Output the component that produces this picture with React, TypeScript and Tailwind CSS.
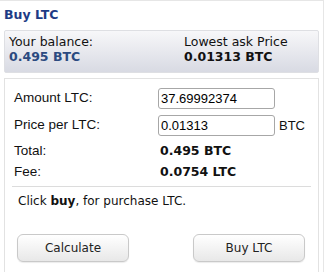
import React from 'react';

const verdana = { fontFamily: '"DejaVu Sans", Verdana, sans-serif' };
const arial = { fontFamily: '"Liberation Sans", Arial, sans-serif' };

function Field({ value }: { value: string }) {
  return (
    <input
      readOnly
      value={value}
      style={arial}
      className="w-[117px] h-[21px] rounded-[3px] border border-[#a7a7a7] bg-white px-[2px] text-[13px] text-black outline-none"
    />
  );
}

function Btn({ label }: { label: string }) {
  return (
    <button
      style={verdana}
      className="w-[112px] h-[28px] rounded-[6px] border border-[#c9c9c9] bg-gradient-to-b from-white to-[#e8e8e8] text-[12px] text-[#222] shadow-[0_1px_1px_rgba(0,0,0,0.08)]"
    >
      {label}
    </button>
  );
}

export default function App() {
  return (
    <div className="w-[324px] h-[272px] overflow-hidden border-t border-r border-[#e6e6e6] bg-white" style={verdana}>
      <div className="pl-[4px] pt-[6px] h-[29px] text-[12.5px] leading-[15px] font-bold text-[#1d3b85]">Buy LTC</div>

      <div className="mx-[4px] w-[315px] h-[43px] rounded-[2px] border border-[#dedfe3] bg-gradient-to-b from-[#f7f7f9] to-[#d8dae3] pl-[4px] pt-[3px] grid grid-cols-[175px_1fr] text-[12.5px] leading-[15px]">
        <div>
          <div className="text-[#111]">Your balance:</div>
          <div className="font-bold text-[#2b4a80]">0.495 BTC</div>
        </div>
        <div>
          <div className="text-[#111]">Lowest ask Price</div>
          <div className="font-bold text-[#111]">0.01313 BTC</div>
        </div>
      </div>

      <div className="mx-[4px] mt-[5px] w-[315px] h-[200px] border border-[#e2e2e2] pt-[9px]">
        <div className="pl-[9px]" style={arial}>
          <div className="flex items-center h-[21px] text-[13.5px] text-[#111]">
            <span className="w-[144px]">Amount LTC:</span>
            <Field value="37.69992374" />
          </div>
          <div className="flex items-center h-[21px] mt-[6px] text-[13.5px] text-[#111]">
            <span className="w-[144px]">Price per LTC:</span>
            <Field value="0.01313" />
            <span className="ml-[4px] text-[13px]">BTC</span>
          </div>
          <div className="flex items-center h-[21px] mt-[5px] text-[13.5px] text-[#111]">
            <span className="w-[146px]">Total:</span>
            <span className="font-bold text-[12.5px]" style={verdana}>0.495 BTC</span>
          </div>
          <div className="flex items-center h-[21px] text-[13.5px] text-[#111]">
            <span className="w-[146px]">Fee:</span>
            <span className="font-bold text-[12.5px]" style={verdana}>0.0754 LTC</span>
          </div>
        </div>

        <div className="mx-[7px] mt-[3px] h-px bg-[#dcdcdc]" />

        <div className="pl-[13px] mt-[7px] text-[12px] leading-[15px] text-[#111]">
          Click <b>buy</b>, for purchase LTC.
        </div>

        <div className="flex justify-between pl-[12px] pr-[13px] mt-[25px]">
          <Btn label="Calculate" />
          <Btn label="Buy LTC" />
        </div>
      </div>
    </div>
  );
}
